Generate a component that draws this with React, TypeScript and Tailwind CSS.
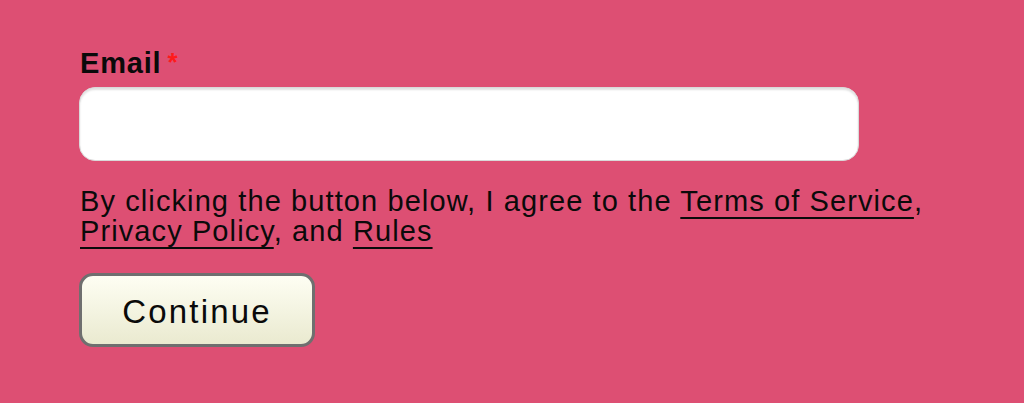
export default function App() {
  return (
    <div className="min-h-[403px] w-[1024px] bg-[#dd4f73] pl-[80px] pt-[49px] font-['Liberation_Sans',Arial,sans-serif] text-[#0a0a0a]">
      {/* Email field */}
      <label className="flex items-start text-[29px] font-bold leading-none tracking-[0.8px]">
        Email
        <span className="ml-[6px] text-[26px] text-[#ff1a1a]">*</span>
      </label>
      <input
        type="email"
        className="-ml-px mt-[9px] block h-[74px] w-[780px] rounded-[16px] border border-[#d9d9d9] bg-white shadow-[inset_0_2px_2px_rgba(0,0,0,0.12)] outline-none"
      />

      {/* Agreement text */}
      <p className="mt-[25px] w-[880px] text-[29px] leading-[30px] tracking-[1.1px]">
        By clicking the button below, I agree to the{' '}
        <a href="#" className="underline decoration-2 underline-offset-[6px]">
          Terms of Service
        </a>
        ,{' '}
        <a href="#" className="underline decoration-2 underline-offset-[6px]">
          Privacy Policy
        </a>
        , and{' '}
        <a href="#" className="underline decoration-2 underline-offset-[6px]">
          Rules
        </a>
      </p>

      {/* Submit */}
      <button className="-ml-px mt-[27px] flex h-[74px] w-[236px] items-center justify-center rounded-[14px] border-[3px] border-[#6f6f6f] bg-gradient-to-b from-[#fefef3] to-[#eaead0] pt-[2px] text-[33px] leading-none tracking-[2.2px] text-[#0a0a0a]">
        Continue
      </button>
    </div>
  );
}
